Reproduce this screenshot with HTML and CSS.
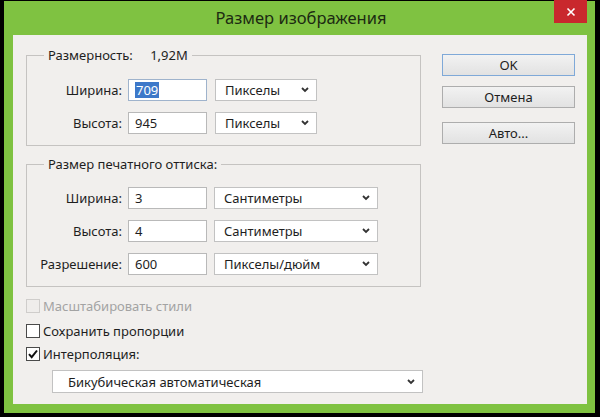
FILE: index.html
```html
<!DOCTYPE html>
<html lang="ru">
<head>
  <meta charset="UTF-8" />
  <title>Размер изображения</title>
  <link rel="stylesheet" href="styles.css">
</head>
<body>
  <div class="window">
    <div class="titlebar">
      <span class="title">Размер изображения</span>
      <button class="close" aria-label="Закрыть">
        <svg width="10" height="10" viewBox="0 0 10 10"><path d="M1.5 1.5l7 7M8.5 1.5l-7 7" stroke="#fff" stroke-width="1.6"/></svg>
      </button>
    </div>

    <div class="content">
      <div class="main">
        <fieldset class="group first">
          <legend>Размерность: <span class="value">1,92M</span></legend>
          <div class="row">
            <label>Ширина:</label>
            <div class="field focused"><span class="selected">709</span></div>
            <div class="select short">Пикселы <svg class="chev" width="8" height="6" viewBox="0 0 8 6"><path d="M1 1l3 3 3-3" fill="none" stroke="#333" stroke-width="1.8"/></svg></div>
          </div>
          <div class="row">
            <label>Высота:</label>
            <div class="field">945</div>
            <div class="select short">Пикселы <svg class="chev" width="8" height="6" viewBox="0 0 8 6"><path d="M1 1l3 3 3-3" fill="none" stroke="#333" stroke-width="1.8"/></svg></div>
          </div>
        </fieldset>

        <fieldset class="group second">
          <legend>Размер печатного оттиска:</legend>
          <div class="row">
            <label>Ширина:</label>
            <div class="field">3</div>
            <div class="select long">Сантиметры <svg class="chev" width="8" height="6" viewBox="0 0 8 6"><path d="M1 1l3 3 3-3" fill="none" stroke="#333" stroke-width="1.8"/></svg></div>
          </div>
          <div class="row">
            <label>Высота:</label>
            <div class="field">4</div>
            <div class="select long">Сантиметры <svg class="chev" width="8" height="6" viewBox="0 0 8 6"><path d="M1 1l3 3 3-3" fill="none" stroke="#333" stroke-width="1.8"/></svg></div>
          </div>
          <div class="row">
            <label>Разрешение:</label>
            <div class="field">600</div>
            <div class="select long">Пикселы/дюйм <svg class="chev" width="8" height="6" viewBox="0 0 8 6"><path d="M1 1l3 3 3-3" fill="none" stroke="#333" stroke-width="1.8"/></svg></div>
          </div>
        </fieldset>

        <div class="checks">
          <div class="check disabled"><span class="box"></span>Масштабировать стили</div>
          <div class="check"><span class="box"></span>Сохранить пропорции</div>
          <div class="check last"><span class="box"><svg width="12" height="12" viewBox="0 0 12 12"><path d="M2 6.2l2.7 3L10 2.5" fill="none" stroke="#111" stroke-width="2"/></svg></span>Интерполяция:</div>
          <div class="select wide">Бикубическая автоматическая <svg class="chev" width="8" height="6" viewBox="0 0 8 6"><path d="M1 1l3 3 3-3" fill="none" stroke="#333" stroke-width="1.8"/></svg></div>
        </div>
      </div>

      <div class="buttons">
        <button class="btn default">OK</button>
        <button class="btn">Отмена</button>
        <button class="btn auto">Авто...</button>
      </div>
    </div>
  </div>
</body>
</html>
```

FILE: styles.css
```css
body {
  margin: 0;
  background: #000;
  font-family: 'Noto Sans', sans-serif;
  font-size: 13px;
  color: #1e1e1e;
}
.window {
  margin: 1px 5px 0 4px;
  width: 591px;
  height: 412px;
  box-sizing: border-box;
  background: #7fc241;
  padding: 0 8px 9px 9px;
  display: flex;
  flex-direction: column;
}
.titlebar {
  height: 34px;
  display: grid;
  grid-template-columns: 1fr auto 1fr;
  align-items: start;
}
.title {
  grid-column: 2;
  font-size: 16.5px;
  line-height: 34px;
  color: #1c2a12;
  padding-left: 2px;
}
.close {
  grid-column: 3;
  justify-self: end;
  width: 33px;
  height: 23px;
  margin-top: -1px;
  border: none;
  background: #c9282d;
  display: flex;
  align-items: center;
  justify-content: center;
  padding: 0;
}
.content {
  flex: 1;
  background: #f1efed;
  display: flex;
  gap: 21px;
  padding: 12px 0 0 13px;
}
.main {
  width: 395px;
}
.group {
  margin: 0;
  padding: 0 0 11px 0;
  border: 1px solid #c5c3c1;
  min-width: 0;
}
.group legend {
  margin-left: 17px;
  padding: 0 4px;
  line-height: 16px;
}
.group .value {
  margin-left: 14px;
}
.group.first .row:first-of-type {
  margin-top: 16px;
}
.group.second {
  margin-top: 10px;
  padding-bottom: 11px;
}
.group.second .row:first-of-type {
  margin-top: 15px;
}
.row {
  display: grid;
  grid-template-columns: 95px 79px auto;
  column-gap: 6px;
  align-items: center;
  height: 22px;
  margin-top: 11px;
}
.row label {
  text-align: right;
}
.field {
  height: 22px;
  box-sizing: border-box;
  border: 1px solid #b9b9b9;
  background: #fff;
  padding-left: 6px;
  line-height: 20px;
}
.field.focused {
  border-color: #9fb3cc;
}
.selected {
  background: #3d78c9;
  color: #fff;
  padding: 0 1px;
  display: inline-block;
  line-height: 16px;
}
.select {
  height: 22px;
  box-sizing: border-box;
  border: 1px solid #c2c2c2;
  background: #fff;
  padding: 0 7px 0 9px;
  display: flex;
  align-items: center;
  justify-content: space-between;
  margin-left: 2px;
}
.select.short {
  width: 102px;
}
.select.long {
  width: 164px;
  margin-left: 1px;
}
.select.wide {
  width: 371px;
  height: 23px;
  margin: 5px 0 0 26px;
  padding-left: 15px;
}
.checks {
  margin-top: 6px;
}
.check {
  display: flex;
  align-items: center;
  gap: 3px;
  height: 25px;
}
.check.last {
  height: 22px;
}
.box {
  width: 14px;
  height: 14px;
  box-sizing: border-box;
  border: 1px solid #4a4a4a;
  background: #fff;
  display: flex;
  align-items: center;
  justify-content: center;
}
.check.disabled {
  color: #a3a3a3;
}
.check.disabled .box {
  border-color: #cfcdcb;
  background: #efedeb;
}
.buttons {
  display: flex;
  flex-direction: column;
  width: 133px;
  padding-top: 7px;
}
.btn {
  height: 22px;
  font-family: inherit;
  font-size: 13px;
  color: #1e1e1e;
  border: 1px solid #adadad;
  background: linear-gradient(#f2f2f2, #e2e2e2);
  padding: 0;
  margin-bottom: 10px;
}
.btn.default {
  border-color: #7fa9d8;
}
.btn.auto {
  margin-top: 4px;
}
```
